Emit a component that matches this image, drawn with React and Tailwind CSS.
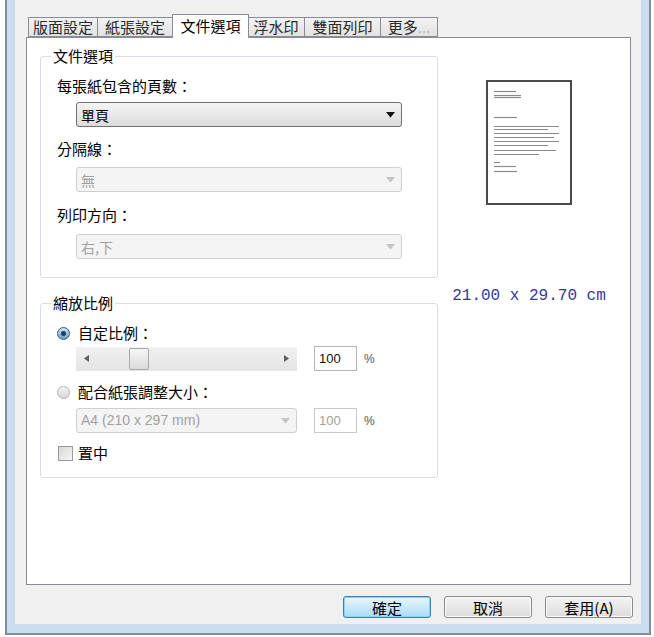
import React from "react";

const cjk = "font-['Noto_Sans_CJK_TC','Liberation_Sans',sans-serif]";

const tabs = [
  { label: "版面設定", w: "w-[70px]" },
  { label: "紙張設定", w: "w-[75px]" },
  { label: "文件選項", w: "w-[77px]", active: true },
  { label: "浮水印", w: "w-[57px]" },
  { label: "雙面列印", w: "w-[76px]" },
  { label: "更多", w: "w-[57px]", more: true },
];

function Tab({ tab }) {
  if (tab.active) {
    return (
      <div
        className={`${tab.w} relative z-10 -mb-px -mx-[1px] flex h-[24px] items-center justify-center border border-b-0 border-[#898c95] bg-white text-[15px] text-[#000]`}
      >
        {tab.label}
      </div>
    );
  }
  return (
    <div
      className={`${tab.w} flex h-[20px] items-center justify-center border border-l-0 border-[#898c95] bg-gradient-to-b from-[#f3f3f3] to-[#e2e2e2] text-[15px] text-[#2a2a2a] first:border-l`}
    >
      {tab.label}
      {tab.more && <span className="text-[#bbb]">...</span>}
    </div>
  );
}

function Select({ value, disabled, w = "w-[326px]" }) {
  return (
    <div
      className={`${w} flex h-[25px] items-center justify-between rounded-[3px] border px-[4px] ${
        disabled
          ? "border-[#cfcfcf] bg-[#f4f4f4] text-[#a2a2a2]"
          : "border-[#707070] bg-gradient-to-b from-[#f4f4f4] to-[#dcdcdc] text-[#000]"
      }`}
    >
      <span className="text-[14px] leading-none">{value}</span>
      <svg width="9" height="6" viewBox="0 0 9 6" className="mr-[2px]">
        <path d="M0 0 L9 0 L4.5 5.5 Z" fill={disabled ? "#c4c4c4" : "#111"} />
      </svg>
    </div>
  );
}

function NumBox({ disabled }) {
  return (
    <div className="flex items-center gap-[7px]">
      <div
        className={`flex h-[25px] w-[43px] items-center border bg-white pl-[4px] font-['Liberation_Sans',sans-serif] text-[13px] ${
          disabled ? "border-[#c9c9c9] text-[#a0a0a0]" : "border-[#b5b5b5] text-[#111]"
        }`}
      >
        100
      </div>
      <span className="font-['Liberation_Sans',sans-serif] text-[12px] text-[#555]">%</span>
    </div>
  );
}

function Radio({ checked }) {
  return checked ? (
    <span className="flex h-[13px] w-[13px] items-center justify-center rounded-full border border-[#2f5f86] bg-gradient-to-b from-[#cfe4f5] to-[#6d9cc2]">
      <span className="h-[5px] w-[5px] rounded-full bg-[#1d3f60]" />
    </span>
  ) : (
    <span className="h-[13px] w-[13px] rounded-full border border-[#b3b3b3] bg-gradient-to-b from-[#f4f4f4] to-[#d6d6d6]" />
  );
}

function Group({ title, children, className = "" }) {
  return (
    <fieldset className={`w-[398px] rounded-[3px] border border-[#d5dfe5] ${className}`}>
      <legend className="ml-[10px] h-[20px] px-[2px] text-[15px] leading-[20px] text-[#000]">{title}</legend>
      {children}
    </fieldset>
  );
}

function PagePreview() {
  // text lines on the thumbnail page: [y, x1, x2]
  const lines = [
    [11, 8, 30],
    [15, 8, 35],
    [17, 8, 35],
    [37, 8, 31],
    [46, 8, 73],
    [49, 8, 62],
    [53, 8, 73],
    [57, 8, 68],
    [61, 8, 73],
    [65, 8, 62],
    [70, 8, 70],
    [74, 8, 53],
    [82, 8, 14],
    [86, 8, 30],
    [91, 8, 31],
  ];
  return (
    <svg width="86" height="125" viewBox="0 0 86 125">
      <rect x="1" y="1" width="84" height="123" fill="#fff" stroke="#4a4a4a" strokeWidth="2" />
      {lines.map(([y, x1, x2], i) => (
        <line key={i} x1={x1} x2={x2} y1={y + 0.5} y2={y + 0.5} stroke="#8a8a8a" strokeWidth="1.2" />
      ))}
    </svg>
  );
}

function Button({ children, primary }) {
  return (
    <button
      className={`h-[22px] w-[88px] rounded-[3px] border text-[15px] leading-none text-[#000] ${
        primary
          ? "border-[#3c7fb1] bg-gradient-to-b from-[#eaf6fd] to-[#a9dcf6] shadow-[inset_0_0_0_1px_#8fd1f3]"
          : "border-[#8a8a8a] bg-gradient-to-b from-[#f4f4f4] to-[#dcdcdc] shadow-[inset_0_0_0_1px_#fbfbfb]"
      }`}
    >
      {children}
    </button>
  );
}

export default function App() {
  return (
    <div className={`h-[637px] w-[654px] bg-white pl-[5px] pr-[3px] ${cjk}`}>
      <div className="h-[635px] border-x-2 border-b-2 border-[#7f8d9c] bg-[#cddcee] px-[8px] pb-[9px]">
        <div className="flex h-full flex-col bg-[#f0f0f0] pl-[11px] pr-[10px] pt-[14px]">
          {/* tabs */}
          <div className="relative z-10 flex h-[23px] items-end pl-[2px]">
            {tabs.map((t) => (
              <Tab key={t.label} tab={t} />
            ))}
          </div>

          {/* panel */}
          <div className="flex flex-1 border border-[#898c95] bg-white pl-[13px]">
            <div className="flex flex-col pt-[8px]">
              <Group title="文件選項" className="pb-[18px]">
                <div className="ml-[16px] mt-[10px] h-[20px] text-[15px] leading-[20px] text-[#000]">每張紙包含的頁數：</div>
                <div className="ml-[35px] mt-[6px]">
                  <Select value="單頁" />
                </div>
                <div className="ml-[16px] mt-[12px] h-[20px] text-[15px] leading-[20px] text-[#000]">分隔線：</div>
                <div className="ml-[35px] mt-[8px]">
                  <Select value="無" disabled />
                </div>
                <div className="ml-[16px] mt-[13px] h-[20px] text-[15px] leading-[20px] text-[#000]">列印方向：</div>
                <div className="ml-[35px] mt-[9px]">
                  <Select value="右,下" disabled />
                </div>
              </Group>

              <Group title="縮放比例" className="mt-[15px] pb-[14px]">
                <div className="ml-[16px] mt-[10px] flex h-[20px] items-center gap-[8px] text-[15px] text-[#000]">
                  <Radio checked />
                  <span>自定比例：</span>
                </div>
                <div className="ml-[35px] mt-[3px] flex items-center gap-[17px]">
                  <div className="flex h-[24px] w-[221px] items-center bg-gradient-to-b from-[#f0f0f0] to-[#e4e4e4] px-[8px]">
                    <svg width="5" height="7" viewBox="0 0 5 7">
                      <path d="M5 0 L0 3.5 L5 7 Z" fill="#606060" />
                    </svg>
                    <div className="ml-[40px] h-[22px] w-[20px] rounded-[2px] border border-[#a8a8a8] bg-gradient-to-b from-[#f6f6f6] to-[#dadada]" />
                    <div className="flex-1" />
                    <svg width="5" height="7" viewBox="0 0 5 7">
                      <path d="M0 0 L5 3.5 L0 7 Z" fill="#606060" />
                    </svg>
                  </div>
                  <NumBox />
                </div>
                <div className="ml-[16px] mt-[11px] flex h-[20px] items-center gap-[8px] text-[15px] text-[#000]">
                  <Radio />
                  <span>配合紙張調整大小：</span>
                </div>
                <div className="ml-[35px] mt-[6px] flex items-center gap-[17px]">
                  <div className="flex h-[25px] w-[221px] items-center justify-between rounded-[3px] border border-[#cfcfcf] bg-[#f4f4f4] px-[4px] font-['Liberation_Sans',sans-serif] text-[14px] text-[#a2a2a2]">
                    <span>A4 (210 x 297 mm)</span>
                    <svg width="9" height="6" viewBox="0 0 9 6" className="mr-[2px]">
                      <path d="M0 0 L9 0 L4.5 5.5 Z" fill="#c4c4c4" />
                    </svg>
                  </div>
                  <NumBox disabled />
                </div>
                <div className="ml-[17px] mt-[10px] flex h-[20px] items-center gap-[5px] text-[15px] text-[#000]">
                  <span className="h-[15px] w-[15px] border border-[#9a9a9a] bg-gradient-to-br from-[#d8d8d8] to-[#f6f6f6]" />
                  <span>置中</span>
                </div>
              </Group>
            </div>

            <div className="flex flex-1 flex-col items-center pl-[2px] pr-[12px] pt-[42px]">
              <PagePreview />
              <div className="mt-[81px] font-['Liberation_Mono',monospace] text-[16px] leading-[20px] text-[#37379c]">
                21.00 x 29.70 cm
              </div>
            </div>
          </div>

          {/* buttons */}
          <div className="-mr-[2px] flex h-[39px] items-start justify-end gap-[13px] pt-[11px]">
            <Button primary>確定</Button>
            <Button>取消</Button>
            <Button>套用(A)</Button>
          </div>
        </div>
      </div>
    </div>
  );
}
